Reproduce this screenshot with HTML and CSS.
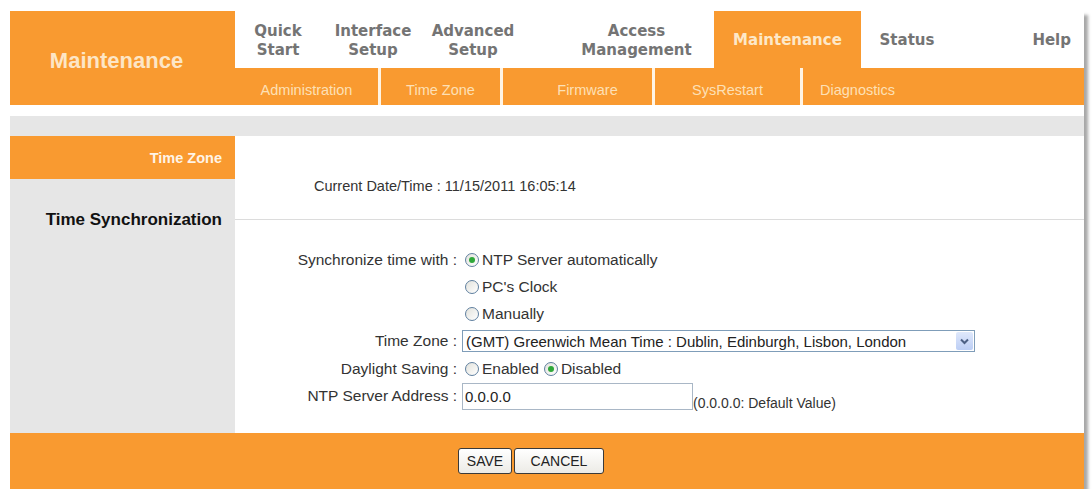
FILE: index.html
```html
<!DOCTYPE html>
<html lang="en">
<head>
    <meta charset="UTF-8">
    <title>Maintenance - Time Zone</title>
    <link rel="stylesheet" href="styles.css">
</head>
<body>
<div class="frame">
    <!-- Cabecera: logo y menús -->
    <div class="top">
        <div class="logo">Maintenance</div>
        <div class="menu">
            <div class="main-nav">
                <a class="nav-item w-quick">Quick<br>Start</a>
                <a class="nav-item w-iface">Interface<br>Setup</a>
                <a class="nav-item w-adv">Advanced<br>Setup</a>
                <a class="nav-item w-access">Access<br>Management</a>
                <a class="nav-item w-maint active">Maintenance</a>
                <a class="nav-item w-status">Status</a>
                <a class="nav-item w-help">Help</a>
            </div>
            <div class="sub-nav">
                <a class="sub-item s-admin">Administration</a>
                <a class="sub-item s-tz">Time Zone</a>
                <a class="sub-item s-fw">Firmware</a>
                <a class="sub-item s-rst">SysRestart</a>
                <a class="sub-item s-diag">Diagnostics</a>
            </div>
        </div>
    </div>

    <div class="strip"></div>

    <!-- Cuerpo -->
    <div class="content">
        <div class="side">
            <div class="side-title">Time Zone</div>
            <div class="side-label">Time Synchronization</div>
        </div>

        <div class="panel">
            <div class="date-row">Current Date/Time : 11/15/2011 16:05:14</div>

            <div class="form">
                <div class="label">Synchronize time with :</div>
                <div class="value"><span class="radio checked"></span>NTP Server automatically</div>

                <div class="label"></div>
                <div class="value"><span class="radio"></span>PC's Clock</div>

                <div class="label"></div>
                <div class="value"><span class="radio"></span>Manually</div>

                <div class="label row-select">Time Zone :</div>
                <div class="value row-select">
                    <div class="select">
                        <span>(GMT) Greenwich Mean Time : Dublin, Edinburgh, Lisbon, London</span>
                        <span class="select-btn">
                            <svg width="9" height="7" viewBox="0 0 9 7"><path d="M1 1.5 L4.5 5 L8 1.5" fill="none" stroke="#4d6185" stroke-width="2"/></svg>
                        </span>
                    </div>
                </div>

                <div class="label row-day">Daylight Saving :</div>
                <div class="value row-day">
                    <span class="radio"></span>Enabled
                    <span class="radio checked second"></span>Disabled
                </div>

                <div class="label row-ntp">NTP Server Address :</div>
                <div class="value row-ntp">
                    <input type="text" class="text-input" value="0.0.0.0">
                    <span class="hint">(0.0.0.0: Default Value)</span>
                </div>
            </div>
        </div>
    </div>

    <!-- Botones -->
    <div class="footer">
        <button class="btn btn-save">SAVE</button>
        <button class="btn btn-cancel">CANCEL</button>
    </div>
</div>
</body>
</html>
```

FILE: styles.css
```css
/* General */
body {
    margin: 0;
    background: #fff;
    font-family: "Liberation Sans", Arial, sans-serif;
    color: #333;
}

.frame {
    margin: 11px 0 0 10px;
    width: 1074px;
    box-shadow: 4px 4px 3px #a8a8a8;
}

/* Cabecera */
.top {
    display: flex;
    height: 94px;
}

.logo {
    width: 225px;
    background-color: #f99a30;
    color: #fde6c6;
    font-weight: bold;
    font-size: 22px;
    display: flex;
    align-items: center;
    justify-content: center;
    padding: 6px 12px 0 0;
    box-sizing: border-box;
}

.menu {
    flex: 1;
    display: flex;
    flex-direction: column;
}

.main-nav {
    height: 57px;
    display: flex;
    background: #fff;
}

.nav-item {
    font-family: "DejaVu Sans", sans-serif;
    font-weight: bold;
    font-size: 15px;
    line-height: 19px;
    color: #747474;
    text-align: center;
    display: flex;
    align-items: center;
    justify-content: center;
    padding-top: 2px;
    box-sizing: border-box;
}

.w-quick { width: 86px; }
.w-iface { width: 104px; }
.w-adv { width: 96px; }
.w-access { width: 193px; padding-left: 38px; }
.w-maint { width: 147px; }
.w-status { width: 92px; }
.w-help { flex: 1; justify-content: flex-end; padding-right: 13px; }

.nav-item.active {
    background-color: #f99a30;
    color: #fde8c8;
}

.sub-nav {
    height: 37px;
    display: flex;
    background-color: #f99a30;
}

.sub-item {
    font-size: 14.5px;
    color: #fde0b6;
    display: flex;
    align-items: center;
    justify-content: center;
    padding-top: 6px;
    box-sizing: border-box;
}

.sub-item + .sub-item {
    border-left: 3px solid #fff4e4;
}

.s-admin { width: 143px; }
.s-tz { width: 122px; }
.s-fw { width: 152px; padding-left: 20px; }
.s-rst { width: 148px; }
.s-diag { flex: 1; justify-content: flex-start; padding-left: 17px; }

/* Franja gris */
.strip {
    margin-top: 11px;
    height: 20px;
    background: #e6e6e6;
}

/* Cuerpo */
.content {
    display: grid;
    grid-template-columns: 225px 1fr;
    height: 297px;
}

.side {
    background: #e6e6e6;
}

.side-title {
    height: 43px;
    background-color: #f99a30;
    color: #fff4e6;
    font-weight: bold;
    font-size: 14.5px;
    text-align: right;
    padding-right: 13px;
    line-height: 45px;
}

.side-label {
    margin-top: 31px;
    font-weight: bold;
    font-size: 17px;
    color: #111;
    text-align: right;
    padding-right: 13px;
}

.panel {
    background: #fff;
}

.date-row {
    height: 84px;
    box-sizing: border-box;
    padding: 42px 0 0 79px;
    font-size: 14.5px;
    border-bottom: 1px solid #dcdcdc;
}

.form {
    display: grid;
    grid-template-columns: 227px 1fr;
    grid-auto-rows: 27px;
    padding-top: 26px;
    font-size: 15.5px;
}

.label {
    text-align: right;
    padding-right: 5px;
    display: flex;
    align-items: center;
    justify-content: flex-end;
}

.value {
    display: flex;
    align-items: center;
}

.form .row-select { height: 28px; }
.form .row-day { height: 29px; }
.form .row-ntp { height: 29px; }

/* Radios */
.radio {
    width: 12px;
    height: 12px;
    border: 1px solid #5f7f9f;
    border-radius: 50%;
    background: linear-gradient(135deg, #e2e2dc, #fff);
    margin: 0 3px 0 3px;
    position: relative;
}

.radio.second {
    margin-left: 5px;
}

.radio.checked::after {
    content: "";
    position: absolute;
    left: 3px;
    top: 3px;
    width: 6px;
    height: 6px;
    border-radius: 50%;
    background: #2fa83a;
}

/* Lista de zona horaria */
.select {
    width: 513px;
    height: 22px;
    border: 1px solid #7f9db9;
    box-sizing: border-box;
    display: flex;
    align-items: center;
    justify-content: space-between;
    padding-left: 3px;
    font-size: 15px;
    color: #222;
}

.select-btn {
    width: 17px;
    height: 18px;
    margin-right: 1px;
    background: linear-gradient(#dfe8fb, #bccef5);
    border-radius: 2px;
    display: flex;
    align-items: center;
    justify-content: center;
}

.text-input {
    width: 231px;
    height: 27px;
    border: 1px solid #a9b7c6;
    box-sizing: border-box;
    padding: 0 2px;
    font-family: "Liberation Sans", Arial, sans-serif;
    font-size: 15px;
    color: #222;
    margin: 0;
}

.row-ntp.value {
    align-items: flex-end;
}

.hint {
    font-size: 14px;
    margin-bottom: -1px;
}

/* Pie con botones */
.footer {
    height: 56px;
    background-color: #f99a30;
    display: flex;
    align-items: center;
    justify-content: center;
    gap: 2px;
    padding-right: 32px;
}

.btn {
    height: 26px;
    border: 1px solid #3a3a3a;
    border-radius: 3px;
    background: linear-gradient(#ffffff, #ecebe6);
    font-family: "Liberation Sans", Arial, sans-serif;
    font-size: 14px;
    color: #222;
    padding: 0;
}

.btn-save { width: 54px; }
.btn-cancel { width: 90px; }
```
